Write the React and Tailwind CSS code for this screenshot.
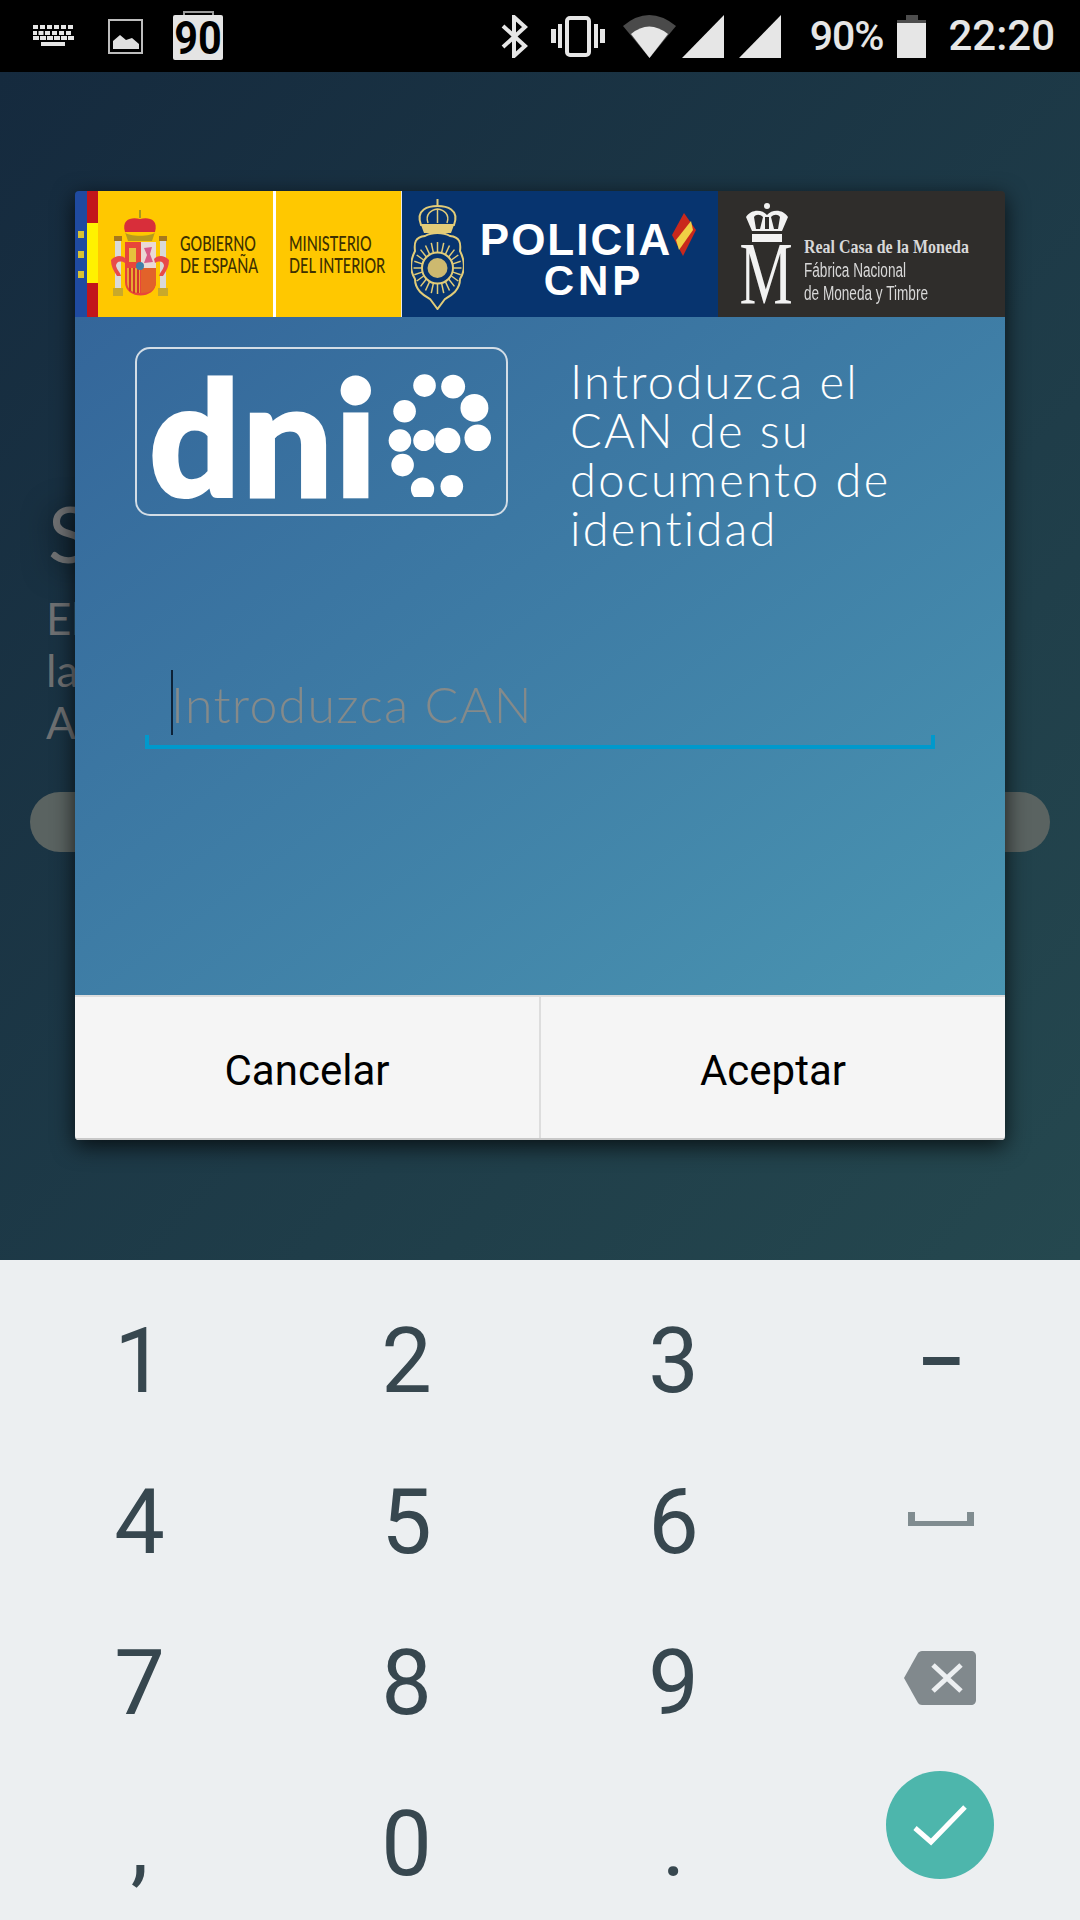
import React from "react";

const roboto = "font-['Roboto',sans-serif]";

function Keyboard() {
  return (
    <svg width="41" height="22" viewBox="0 0 41 22" fill="#e6e6e6" className="block">
      {[0, 7, 14, 21, 28, 35].map((x) => <rect key={x} x={x} y="0" width="5" height="4" />)}
      {[0, 5.5, 12, 19, 26, 33].map((x) => <rect key={x} x={x} y="6" width={x === 0 ? 4 : 5} height="4" />)}
      {[0, 7, 14, 21, 28, 35].map((x) => <rect key={x} x={x} y="11" width="6" height="4" />)}
      <rect x="8" y="17" width="24" height="4" />
    </svg>
  );
}

function ImageIcon() {
  return (
    <svg width="35" height="35" viewBox="0 0 35 35" className="block">
      <rect x="1" y="1" width="33" height="33" fill="none" stroke="#bdbdbd" strokeWidth="2" />
      <path d="M5 30V22L12 16L18 21L24 19L31 25V30Z" fill="#e0e0e0" />
    </svg>
  );
}

function Notif() {
  return (
    <div className="relative w-[50px] h-[45px] mt-[3px] bg-[#e4e4e4] rounded-[2px] flex items-center justify-center">
      <div className="absolute -top-[4px] left-[10px] w-[31px] h-[4px] border-t-2 border-x-2 border-[#9a9a9a]" />
      <span className={`${roboto} font-bold text-[47px] leading-none text-black scale-x-[0.88]`}>90</span>
    </div>
  );
}

function Bluetooth() {
  return (
    <svg width="27" height="43" viewBox="0 0 27 43" fill="none" stroke="#e6e6e6" strokeWidth="4" className="block">
      <path d="M2 11L24 31L13 41V2L24 12L2 32" />
    </svg>
  );
}

function Vibrate() {
  return (
    <svg width="54" height="41" viewBox="0 0 54 41" className="block" fill="#e6e6e6">
      <rect x="16" y="2" width="22" height="37" rx="3" fill="none" stroke="#e6e6e6" strokeWidth="4" />
      <rect x="0" y="13" width="5" height="14" />
      <rect x="7" y="8" width="4" height="24" />
      <rect x="43" y="8" width="4" height="24" />
      <rect x="49" y="13" width="5" height="14" />
    </svg>
  );
}

function Wifi() {
  return (
    <svg width="53" height="43" viewBox="0 0 53 43" className="block">
      <path d="M0 11Q26 -11 53 11L26.5 43Z" fill="#4a4a4a" />
      <path d="M8 19Q26 4 45 19L26.5 43Z" fill="#e6e6e6" />
    </svg>
  );
}

function Signal() {
  return (
    <svg width="42" height="43" viewBox="0 0 42 43" className="block">
      <path d="M42 0V43H0Z" fill="#e6e6e6" />
    </svg>
  );
}

function Battery() {
  return (
    <svg width="29" height="43" viewBox="0 0 29 43" className="block">
      <rect x="9" y="0" width="12" height="5" fill="#4d4d4d" />
      <rect x="0" y="5" width="29" height="4" fill="#4d4d4d" />
      <rect x="0" y="8" width="29" height="35" fill="#e6e6e6" />
    </svg>
  );
}

function StatusBar() {
  return (
    <div className="h-[72px] bg-black flex items-center shrink-0 pl-[33px] pr-[25px]">
      <Keyboard />
      <div className="ml-[34px]"><ImageIcon /></div>
      <div className="ml-[30px]"><Notif /></div>
      <div className="ml-auto"><Bluetooth /></div>
      <div className="ml-[23px]"><Vibrate /></div>
      <div className="ml-[18px]"><Wifi /></div>
      <div className="ml-[6px]"><Signal /></div>
      <div className="ml-[15px]"><Signal /></div>
      <span className={`${roboto} ml-[29px] font-medium text-[41px] leading-none text-[#e6e6e6] tracking-[-1px]`}>90%</span>
      <div className="ml-[14px]"><Battery /></div>
      <span className={`${roboto} ml-[22px] font-medium text-[42px] leading-none text-[#e6e6e6]`}>22:20</span>
    </div>
  );
}

function Escudo() {
  return (
    <svg width="58" height="88" viewBox="0 0 58 88" className="block">
      <path d="M29 0V8" stroke="#8a8a2a" strokeWidth="1.5" />
      <path d="M14 22C10 8 22 7 29 9C36 7 48 8 44 22Z" fill="#d82e3a" />
      <path d="M14 22C16 27 42 27 44 22L41 31H17Z" fill="#b79a1e" />
      <rect x="4" y="30" width="6" height="54" fill="#d9d9d9" />
      <rect x="49" y="30" width="6" height="54" fill="#d9d9d9" />
      <rect x="3" y="26" width="8" height="5" fill="#a6781e" />
      <rect x="48" y="26" width="8" height="5" fill="#a6781e" />
      <rect x="2" y="78" width="10" height="8" fill="#c9a92a" />
      <rect x="47" y="78" width="10" height="8" fill="#c9a92a" />
      <path d="M14 32H45V72C45 90 14 90 14 72Z" fill="#e8463a" />
      <rect x="30" y="32" width="15" height="26" fill="#ead9d5" />
      <path d="M33 38L41 37L39 44L42 52L33 53L36 45Z" fill="#d95b86" />
      <rect x="18" y="38" width="7" height="14" fill="#e6c23c" />
      <path d="M16 58H29V83C22 83 16 80 16 72Z" fill="#e9a632" />
      <path d="M19 58V81M23 58V83M27 58V83" stroke="#d2342d" strokeWidth="2" />
      <path d="M30 58H45V72C45 80 38 83 30 83Z" fill="#e2622a" />
      <circle cx="29" cy="56" r="4" fill="#3f7fa8" />
      <path d="M0 50C6 44 12 46 15 49L14 53C9 50 5 52 5 56C6 60 9 62 10 66L6 66C2 60 0 56 0 50Z" fill="#e84a4a" />
      <path d="M58 50C52 44 46 46 43 49L44 53C49 50 53 52 53 56C52 60 49 62 48 66L52 66C56 60 58 56 58 50Z" fill="#e84a4a" />
    </svg>
  );
}

function PoliceBadge() {
  const rays = Array.from({ length: 24 }, (_, i) => (i * Math.PI) / 12);
  return (
    <svg width="53" height="111" viewBox="0 0 53 111" className="block" fill="none" stroke="#e2cc78">
      <path d="M26.500 0V6" strokeWidth="2" />
      <path d="M10 26C4 10 18 7 26.500 7C35 7 49 10 43 26Z" strokeWidth="2" />
      <path d="M17 24C14 15 20 11 26.500 10C33 11 39 15 36 24M26.500 10V24" strokeWidth="1.5" />
      <path d="M10 26L13 34H40L43 26Z" fill="#e2cc78" stroke="none" />
      <path d="M14 37C4 38 3 44 4 52C-1 62 -1 72 4 80C4 92 14 97 19 100L26.500 110L34 100C39 97 49 92 49 80C54 72 54 62 49 52C50 44 49 38 39 37C32 33 21 33 14 37Z" strokeWidth="2" />
      {rays.map((a, i) => (
        <path key={i} d={`M${26.5 + Math.cos(a) * 16} ${69 + Math.sin(a) * 16}L${26.5 + Math.cos(a) * 24} ${69 + Math.sin(a) * 26}`} strokeWidth="1.5" />
      ))}
      <circle cx="26.500" cy="69" r="15.500" strokeWidth="2" />
      <circle cx="26.500" cy="69" r="10" fill="#cdb96f" stroke="none" />
    </svg>
  );
}

function SpainFlag() {
  return (
    <svg width="24" height="43" viewBox="0 0 24 43" className="block">
      <path d="M0 22L12 0L24 17L11 43Z" fill="#c9281c" />
      <path d="M4 27L19 8L21 17L7 37Z" fill="#f0cf45" />
    </svg>
  );
}

function Crown() {
  return (
    <svg width="42" height="40" viewBox="0 0 42 40" className="block" fill="#f2f2f2">
      <circle cx="21" cy="3" r="3" />
      <path d="M0 14C5 6 16 6 21 12C26 6 37 6 42 14L36 28H6Z" />
      <path d="M8 14C10 11 14 11 17 14L14 26H10ZM34 14C32 11 28 11 25 14L28 26H32Z" fill="#2f2d2b" />
      <rect x="19" y="14" width="4" height="12" fill="#2f2d2b" />
      <rect x="6" y="31" width="30" height="8" />
    </svg>
  );
}

function Header() {
  const gob = "font-['Lato',sans-serif] text-[21px] leading-[22px] text-[#3d3000] font-medium whitespace-nowrap w-fit origin-left scale-x-[0.69]";
  return (
    <div className="flex h-[126px] blur-[0.5px]">
      <div className="w-[12px] bg-[#1f4aa0] flex flex-col items-center justify-center gap-[13px] pt-[1px]">
        {[0, 1, 2].map((i) => <div key={i} className="w-[6px] h-[7px] bg-[#d8c232]" />)}
      </div>
      <div className="w-[11px] flex flex-col">
        <div className="h-[32px] bg-[#c2151b]" />
        <div className="h-[60px] bg-[#fff200]" />
        <div className="h-[34px] bg-[#c2151b]" />
      </div>
      <div className="w-[175px] bg-[#ffc800] flex items-center pl-[13px]">
        <Escudo />
        <div className="ml-[11px] w-[80px]">
          <div className={gob}>GOBIERNO</div>
          <div className={gob}>DE ESPAÑA</div>
        </div>
      </div>
      <div className="w-[3px] bg-white" />
      <div className="w-[125px] bg-[#ffc800] flex items-center pl-[13px]">
        <div>
          <div className={gob}>MINISTERIO</div>
          <div className={gob}>DEL INTERIOR</div>
        </div>
      </div>
      <div className="w-[1px] bg-[#e6e6e6]" />
      <div className="w-[316px] bg-[#07346f] flex items-center pl-[9px]">
        <PoliceBadge />
        <div className="ml-[19px] mt-[12px] flex flex-col items-center w-[186px]">
          <span className="font-['Liberation_Sans',sans-serif] font-bold text-[44px] leading-[42px] text-white tracking-[2px]">POLICIA</span>
          <span className="ml-[36px] font-['Liberation_Sans',sans-serif] font-bold text-[42px] leading-[40px] text-white tracking-[4px]">CNP</span>
        </div>
        <div className="ml-[3px] -mt-[39px]"><SpainFlag /></div>
      </div>
      <div className="flex-1 bg-[#2f2d2b] flex items-center pl-[21px]">
        <div className="w-[55px] flex flex-col items-center -mt-[3px]">
          <Crown />
          <span className="font-['Liberation_Serif',serif] text-[88px] leading-[62px] h-[60px] text-[#f2f2f2] scale-x-[0.68]">M</span>
        </div>
        <div className="ml-[10px] mt-[32px] text-[#d8d8d8] whitespace-nowrap">
          <div className="font-['Liberation_Serif',serif] font-bold text-[19px] leading-[24px] w-fit origin-left scale-x-[0.84]">Real Casa de la Moneda</div>
          <div className="font-['Liberation_Sans',sans-serif] text-[20px] leading-[23px] w-fit origin-left scale-x-[0.68]">Fábrica Nacional</div>
          <div className="font-['Liberation_Sans',sans-serif] text-[20px] leading-[23px] w-fit origin-left scale-x-[0.68]">de Moneda y Timbre</div>
        </div>
      </div>
    </div>
  );
}

function DniLogo() {
  const dots = [[912,165,34],[998,168,36],[1062,232,42],[852,242,34],[838,330,34],[910,330,32],[982,330,38],[1072,322,40],[846,404,34],[906,476,35],[994,468,34]];
  return (
    <div className="w-[373px] h-[169px] border-2 border-[#d3dde6] rounded-[15px] flex items-center shrink-0 pl-[12px]">
      <span className="font-['Lato',sans-serif] font-black text-[160px] leading-none text-white tracking-[2px] mt-[6px] [-webkit-text-stroke:3px_white]">dni</span>
      <svg width="107" height="133" viewBox="800 100 320 400" fill="#ffffff" className="block ml-[8px] -mt-[3px]">
        {dots.map(([x, y, r], i) => <circle key={i} cx={x} cy={y} r={r} />)}
      </svg>
    </div>
  );
}

function Dialog() {
  return (
    <div className="absolute left-[75px] top-[119px] w-[930px] rounded-[4px] overflow-hidden shadow-[0_6px_22px_rgba(0,0,0,0.75)]">
      <Header />
      <div className="h-[678px] bg-linear-to-br from-[#34669a] to-[#4a95b1] flex flex-col">
        <div className="h-[353px] flex items-start pl-[60px] pt-[30px]">
          <DniLogo />
          <div className="ml-[62px] mt-[10px] font-['Lato',sans-serif] font-light text-[47px] leading-[49px] text-white tracking-[2.25px] whitespace-nowrap">
            <div>Introduzca el</div>
            <div>CAN de su</div>
            <div>documento de</div>
            <div>identidad</div>
          </div>
        </div>
        <div className="relative ml-[70px] w-[790px] h-[79px]">
          <div className="absolute left-[26px] top-0 w-[2px] h-[65px] bg-[#0d2238]" />
          <div className="pl-[26px] pt-[4px] font-['Lato',sans-serif] font-light text-[50px] leading-[60px] text-[#858a8a] tracking-[1.3px]">Introduzca CAN</div>
          <div className="absolute bottom-0 left-0 right-0 h-[14px] border-x-4 border-b-4 border-[#0099cc]" />
        </div>
      </div>
      <div className={`flex h-[145px] bg-[#f5f5f5] border-t-2 border-[#dddddd] border-b-2 border-b-[#c8c8c8] ${roboto} text-[42px] text-black`}>
        <div className="w-[466px] pt-[6px] flex items-center justify-center border-r-2 border-[#dddddd]">Cancelar</div>
        <div className="flex-1 pt-[6px] flex items-center justify-center">Aceptar</div>
      </div>
    </div>
  );
}

function Background() {
  return (
    <div className="relative h-[1188px] shrink-0 bg-linear-to-br from-[#152a3e] to-[#25484f] overflow-hidden">
      <div className="pl-[46px] pt-[416px] font-['Lato',sans-serif] text-[#6e7072]">
        <div className="font-normal text-[78px] leading-[90px] pl-[2px] [text-shadow:0_4px_30px_rgba(0,0,0,0.7)]">S</div>
        <div className="mt-[14px] text-[44px] leading-[52px]">
          <div>El</div>
          <div>la</div>
          <div>A</div>
        </div>
      </div>
      <div className="mx-[30px] mt-[44px] h-[60px] rounded-full bg-[#5a6361]" />
      <Dialog />
    </div>
  );
}

function SpaceIcon() {
  return (
    <svg width="66" height="14" viewBox="0 0 66 14" fill="#808c90" className="block">
      <path d="M0 0H7V9H59V0H66V14H0Z" />
    </svg>
  );
}

function BackspaceIcon() {
  return (
    <svg width="72" height="54" viewBox="0 0 72 54" className="block">
      <path d="M18 0H67C70 0 72 2 72 5V49C72 52 70 54 67 54H18C16 54 15 53 14 52L0 27L14 2C15 1 16 0 18 0Z" fill="#81898d" />
      <path d="M29 14L57 40M57 14L29 40" stroke="#eceff1" strokeWidth="5" />
    </svg>
  );
}

function Key({ children, className = "" }) {
  return <div className={`flex items-center justify-center ${className}`}>{children}</div>;
}

function Keypad() {
  const rows = [
    ["1", "2", "3"],
    ["4", "5", "6"],
    ["7", "8", "9"],
    [",", "0", "."],
  ];
  const side = [
    <span key="m" className={`${roboto} font-bold text-[72px] leading-none text-[#37474f]`}>–</span>,
    <div key="s" className="-translate-y-[4px]"><SpaceIcon /></div>,
    <div key="b" className="-translate-y-[6px] -translate-x-[1px]"><BackspaceIcon /></div>,
    <div key="c" className="w-[108px] h-[108px] -translate-y-[20px] -translate-x-[1px] rounded-full bg-[#4db6ac] flex items-center justify-center">
      <svg width="56" height="44" viewBox="0 0 56 44" fill="none" stroke="#ffffff" strokeWidth="5" className="block">
        <path d="M3 25L19 39L53 4" strokeLinejoin="miter" />
      </svg>
    </div>,
  ];
  return (
    <div className="flex-1 bg-[#eceff1] pl-[6px] pt-[21px] grid grid-cols-[repeat(4,267px)] auto-rows-[161px]">
      {rows.map((row, r) => (
        <React.Fragment key={r}>
          {row.map((k) => (
            <Key key={k} className={`${roboto} text-[90px] leading-none text-[#37474f]`}>{k}</Key>
          ))}
          <Key>{side[r]}</Key>
        </React.Fragment>
      ))}
    </div>
  );
}

export default function App() {
  return (
    <div className="w-[1080px] h-[1920px] flex flex-col overflow-hidden">
      <StatusBar />
      <Background />
      <Keypad />
    </div>
  );
}
